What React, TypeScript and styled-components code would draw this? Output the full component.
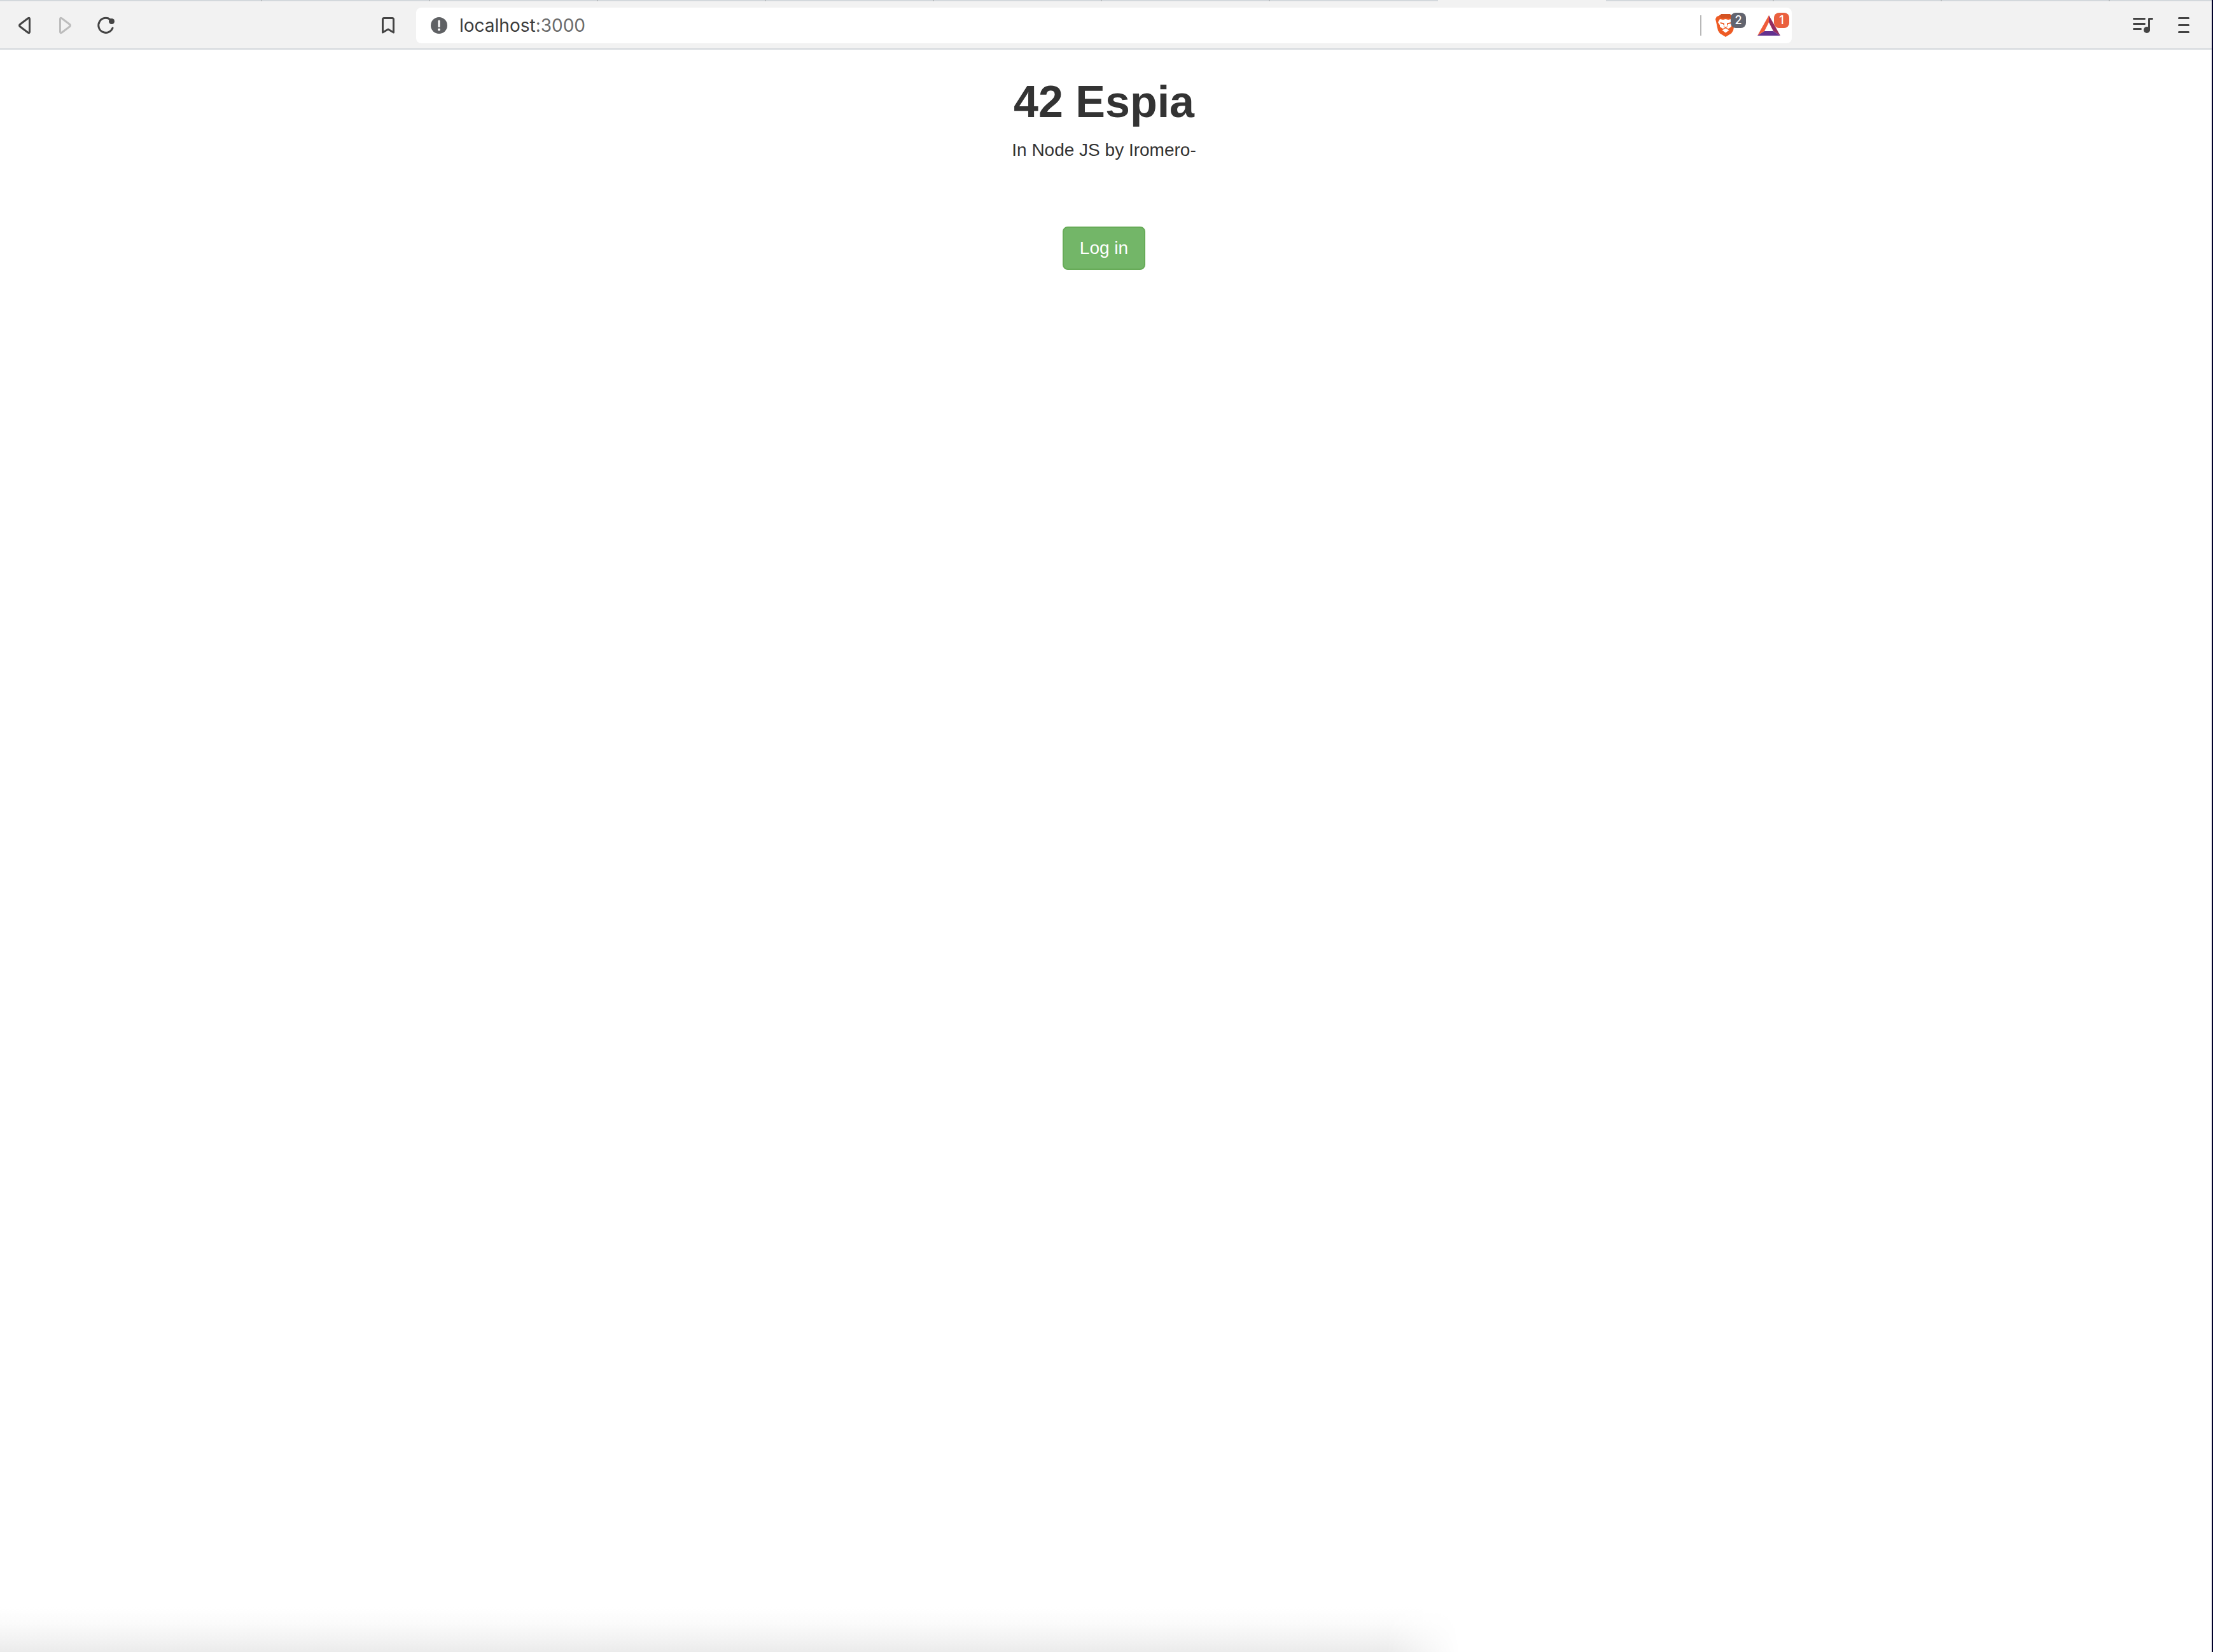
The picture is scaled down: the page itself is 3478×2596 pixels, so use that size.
import React from 'react';
import styled, { createGlobalStyle } from 'styled-components';

const GlobalStyle = createGlobalStyle`
  * { box-sizing: border-box; }
  body { margin: 0; background: #fff; }
`;

const Window = styled.div`
  display: flex;
  flex-direction: column;
  min-height: 100vh;
  background: #fff;
  border-right: 2px solid #00002a;
  font-family: "Liberation Sans", Arial, sans-serif;
`;

const TabEdge = styled.div`
  display: flex;
  height: 2px;
  overflow: hidden;
  background: #d3d8dc;
`;

const Tab = styled.div<{ $kind: string }>`
  flex: ${(p) => (p.$kind === 'last' ? '1 1 0' : `0 0 ${p.$kind === 'first' ? 412 : 264}px`)};
  background: ${(p) => (p.$kind === 'active' ? '#f2f2f2' : '#d3d8dc')};
  border-right: ${(p) => (p.$kind === 'tab' || p.$kind === 'first' ? '2px solid #b9bdbf' : 0)};
  border-left: 0;
`;

const Toolbar = styled.header`
  display: grid;
  grid-template-columns: 654fr 2162fr 660fr;
  align-items: center;
  height: 76px;
  padding-top: 2px;
  background: #f2f2f2;
  border-bottom: 2px solid #d3d8dc;
`;

const ToolGroup = styled.div<{ $end?: boolean }>`
  display: flex;
  align-items: center;
  justify-content: ${(p) => (p.$end ? 'flex-end' : 'space-between')};
  gap: 24px;
  padding: ${(p) => (p.$end ? '0 24px 0 0' : '0 24px 0 18px')};
`;

const NavButtons = styled.nav`
  display: flex;
  gap: 24px;
`;

const IconButton = styled.button`
  display: flex;
  align-items: center;
  justify-content: center;
  width: 40px;
  height: 40px;
  padding: 0;
  border: 0;
  background: none;
  color: #444;
  &:disabled { color: #bdbdbd; }
`;

const AddressBar = styled.form`
  display: flex;
  align-items: center;
  height: 56px;
  padding: 0 4px 0 16px;
  border-radius: 8px;
  background: #fff;
`;

const Address = styled.label`
  position: relative;
  display: flex;
  flex: 1;
  align-items: center;
  margin-left: 12px;
  font-family: Inter, Roboto, sans-serif;
  font-size: 28px;
  line-height: 40px;
  color: #6b6b6b;
`;

const AddressInput = styled.input`
  flex: 1;
  min-width: 0;
  padding: 0;
  border: 0;
  outline: 0;
  background: none;
  font: inherit;
  color: transparent;
  caret-color: #3c3c3c;
`;

const AddressText = styled.span`
  position: absolute;
  left: 0;
  pointer-events: none;
`;

const Host = styled.span`
  color: #3c3c3c;
`;

const Divider = styled.span`
  width: 2px;
  height: 32px;
  margin-right: 4px;
  background: #b8b8b8;
`;

const Extension = styled.button<{ $width: number }>`
  position: relative;
  display: flex;
  align-items: center;
  width: ${(p) => p.$width}px;
  height: 56px;
  margin-left: 18px;
  padding: 0;
  border: 0;
  background: none;
`;

const Badge = styled.span<{ $color: string }>`
  position: absolute;
  top: 8px;
  right: 0;
  width: 24px;
  height: 24px;
  border-radius: 8px;
  background: ${(p) => p.$color};
  color: #fff;
  font-family: Inter, Roboto, sans-serif;
  font-size: 18px;
  font-weight: 500;
  line-height: 24px;
  text-align: center;
`;

const Page = styled.main`
  display: flex;
  flex: 1;
  flex-direction: column;
  align-items: center;
  padding: 42px 6px 0 0;
  color: #333;
`;

const Title = styled.h1`
  margin: 0;
  font-size: 70px;
  font-weight: 700;
  line-height: 80px;
`;

const Subtitle = styled.p`
  margin: 16px 0 100px;
  font-size: 28px;
  line-height: 40px;
`;

const LoginButton = styled.button`
  min-width: 130px;
  padding: 12px 24px;
  border: 2px solid #67ab58;
  border-radius: 8px;
  background: #73b668;
  color: #fff;
  font: 28px/40px "Liberation Sans", Arial, sans-serif;
`;

const BottomShade = styled.div`
  width: 66%;
  height: 70px;
  background: linear-gradient(to top, #ebebeb, #f3f3f3 30%, #fbfbfb 65%, #fff);
  mask-image: linear-gradient(to right, #000 95%, transparent);
`;

const BackIcon = () => (
  <svg width="40" height="40" viewBox="0 0 40 40" fill="none" stroke="currentColor" strokeWidth="3" strokeLinejoin="round">
    <path d="M26 8.8 Q28.5 7.5 28.5 10 V30 Q28.5 32.5 26 31.2 L13.5 21.8 Q11.5 20 13.5 18.2 Z" />
  </svg>
);

const ForwardIcon = () => (
  <svg width="40" height="40" viewBox="0 0 40 40" fill="none" stroke="currentColor" strokeWidth="3" strokeLinejoin="round">
    <path d="M15 8.8 Q12.5 7.5 12.5 10 V30 Q12.5 32.5 15 31.2 L27.5 21.8 Q29.5 20 27.5 18.2 Z" />
  </svg>
);

const ReloadIcon = () => (
  <svg width="40" height="40" viewBox="0 0 40 40" fill="none">
    <path d="M27 10.5 A11.5 11.5 0 1 0 31 24" stroke="currentColor" strokeWidth="3" strokeLinecap="round" />
    <circle cx="29.5" cy="13.5" r="4.5" fill="currentColor" />
  </svg>
);

const BookmarkIcon = () => (
  <svg width="40" height="40" viewBox="0 0 40 40" fill="none" stroke="currentColor" strokeWidth="3" strokeLinejoin="round">
    <path d="M11.5 31 V10.5 Q11.5 8.5 13.5 8.5 H26.5 Q28.5 8.5 28.5 10.5 V31 L20 26 Z" />
  </svg>
);

const InfoIcon = () => (
  <svg width="40" height="40" viewBox="0 0 40 40">
    <circle cx="20" cy="20" r="13" fill="#5f6164" />
    <path d="M20 13 V21.5" stroke="#fff" strokeWidth="3" strokeLinecap="round" />
    <circle cx="20" cy="26.5" r="2" fill="#fff" />
  </svg>
);

const BraveIcon = () => (
  <svg width="32" height="36" viewBox="0 0 32 36">
    <path d="M8 1 L24 1 L27 3.500 L30 4 L31.500 8 L30.500 12 L28 26 L25 30.500 L16 36 L7 30.500 L4 26 L1 12 L0 8 L2 4 L5 3 Z" fill="#ee5b24" />
    <path d="M9 0 H23 L26 4 L22 6.500 L16 5.500 L10 6.500 L6 4 Z" fill="#d35323" />
    <path d="M7 8 L12 9 L16 8 L20 9 L25 8 L28 13 L25 17.500 L25 20 L20.500 23 L16 21.500 L11.500 23 L7 20 L7 17.500 L4 13 Z" fill="#fff" />
    <path d="M7.500 13 L14 14.500 L14 19 L12 16 L8 15 Z M24.500 13 L18 14.500 L18 19 L20 16 L24 15 Z M12.500 19 L16 20.500 L19.500 19 L16.500 22.500 H15.500 Z" fill="#ee5b24" />
    <path d="M10.500 25.500 L16 22.500 L21.500 25.500 L16 29.500 Z" fill="#fff" />
  </svg>
);

const RewardsIcon = () => (
  <svg width="36" height="32" viewBox="0 0 36 32">
    <path d="M18 0 V11 L11 25 L0 32 Z" fill="#ef5c3b" />
    <path d="M18 0 L36 32 L25 25 L18 11 Z" fill="#932d62" />
    <path d="M0 32 L11 25 H25 L36 32 Z" fill="#63318f" />
  </svg>
);

const PlaylistIcon = () => (
  <svg width="40" height="40" viewBox="0 0 40 40" fill="none" stroke="currentColor" strokeWidth="3" strokeLinecap="round">
    <path d="M5.500 9.500 H22.500 M5.500 17.500 H22.500 M5.500 25.500 H16.500" />
    <path d="M34.500 9.500 H29.500 V27" strokeLinejoin="round" />
    <circle cx="26" cy="27" r="5" fill="currentColor" stroke="none" />
  </svg>
);

const MenuIcon = () => (
  <svg width="40" height="40" viewBox="0 0 40 40" stroke="currentColor" strokeWidth="3" strokeLinecap="round">
    <path d="M12.500 8.500 H27.500 M12.500 19.500 H27.500 M12.500 30.500 H27.500" />
  </svg>
);

const tabs = ['first', 'tab', 'tab', 'tab', 'tab', 'tab', 'tab', 'beforeActive', 'active', 'tab', 'tab', 'tab', 'last'];

export default function App() {
  const [url, setUrl] = React.useState('localhost:3000');
  const [host, ...rest] = url.split(':');

  return (
    <>
      <GlobalStyle />
      <Window>
        <TabEdge aria-hidden="true">
          {tabs.map((kind, i) => (
            <Tab key={i} $kind={kind} />
          ))}
        </TabEdge>
        <Toolbar>
          <ToolGroup>
            <NavButtons>
              <IconButton aria-label="Back"><BackIcon /></IconButton>
              <IconButton aria-label="Forward" disabled><ForwardIcon /></IconButton>
              <IconButton aria-label="Reload"><ReloadIcon /></IconButton>
            </NavButtons>
            <IconButton aria-label="Bookmark this page"><BookmarkIcon /></IconButton>
          </ToolGroup>
          <AddressBar onSubmit={(e) => e.preventDefault()}>
            <InfoIcon />
            <Address>
              <AddressInput aria-label="Address" value={url} onChange={(e) => setUrl(e.target.value)} />
              <AddressText aria-hidden="true">
                <Host>{host}</Host>
                {rest.map((part) => `:${part}`).join('')}
              </AddressText>
            </Address>
            <Divider />
            <Extension type="button" aria-label="Shields" $width={48}>
              <BraveIcon />
              <Badge $color="#62646f">2</Badge>
            </Extension>
            <Extension type="button" aria-label="Rewards" $width={50}>
              <RewardsIcon />
              <Badge $color="#ea603f">1</Badge>
            </Extension>
          </AddressBar>
          <ToolGroup $end>
            <IconButton aria-label="Playlist"><PlaylistIcon /></IconButton>
            <IconButton aria-label="Menu"><MenuIcon /></IconButton>
          </ToolGroup>
        </Toolbar>
        <Page>
          <Title>42 Espia</Title>
          <Subtitle>In Node JS by Iromero-</Subtitle>
          <LoginButton type="button">Log in</LoginButton>
        </Page>
        <BottomShade />
      </Window>
    </>
  );
}
